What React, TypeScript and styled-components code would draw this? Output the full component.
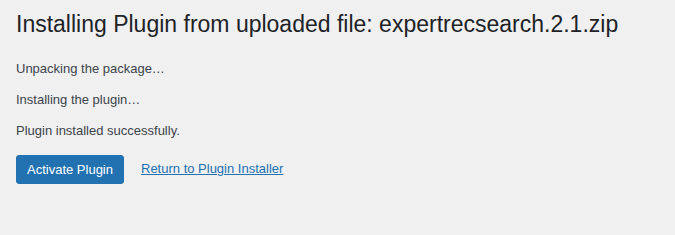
import React from 'react'
import styled, { createGlobalStyle } from 'styled-components'

const GlobalStyle = createGlobalStyle`
  html, body {
    margin: 0;
    padding: 0;
    background: #f0f0f1;
  }
  body {
    font-family: "Liberation Sans", Arial, sans-serif;
    font-size: 13px;
    line-height: 1.4em;
    color: #3c434a;
  }
`

const Wrap = styled.div`
  padding: 10px 16px 0 16px;
`

const Title = styled.h1`
  font-size: 23px;
  font-weight: 400;
  line-height: 1.3;
  color: #1d2327;
  margin: 0 0 20px 0;
`

const Step = styled.p`
  font-size: 13px;
  line-height: 1.4em;
  margin: 13px 0;
`

const Actions = styled.div`
  display: flex;
  align-items: center;
  gap: 17px;
  margin: 14px 0 13px;
`

const Button = styled.a`
  display: inline-block;
  box-sizing: border-box;
  min-height: 29px;
  line-height: 27px;
  padding: 0 10px;
  font-size: 13px;
  color: #fff;
  background: #2271b1;
  border: 1px solid #2271b1;
  border-radius: 3px;
  text-decoration: none;
  white-space: nowrap;
  cursor: pointer;
`

const TextLink = styled.a`
  color: #2271b1;
  text-decoration: underline;
  font-size: 13px;
`

export default function App() {
  return (
    <>
      <GlobalStyle />
      <Wrap>
        <Title>Installing Plugin from uploaded file: expertrecsearch.2.1.zip</Title>
        <Step>Unpacking the package…</Step>
        <Step>Installing the plugin…</Step>
        <Step>Plugin installed successfully.</Step>
        <Actions>
          <Button href="#">Activate Plugin</Button>
          <TextLink href="#">Return to Plugin Installer</TextLink>
        </Actions>
      </Wrap>
    </>
  )
}
